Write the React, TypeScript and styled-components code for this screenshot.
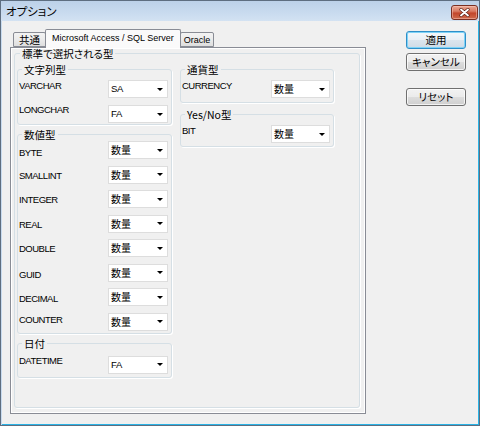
import React from "react";
import styled, { createGlobalStyle } from "styled-components";

const JP = `"Noto Sans CJK JP", "Noto Sans", sans-serif`;
const UI = `"Liberation Sans", Arial, "Noto Sans CJK JP", sans-serif`;

const GlobalStyle = createGlobalStyle`
  html, body { margin: 0; padding: 0; background: #ffffff; }
  body { font-family: ${UI}; font-feature-settings: "palt"; color: #000; }
  #root { width: 480px; height: 426px; }
`;

const Window = styled.div`
  width: 480px;
  height: 426px;
  box-sizing: border-box;
  border: 1px solid #5e6e80;
  background: #c8dbef;
  display: flex;
  flex-direction: column;
`;

const TitleBar = styled.div`
  height: 20px;
  flex: none;
  display: flex;
  justify-content: space-between;
  align-items: flex-start;
  padding: 0 1px 0 5px;
  background: linear-gradient(to bottom, #bcd1e9 0%, #c9dbef 60%, #d3e2f2 100%);
`;

const Title = styled.span`
  font-family: ${JP};
  font-size: 11.5px;
  line-height: 21px;
  color: #000;
`;

const CloseButton = styled.div`
  margin-top: 4px;
  width: 27px;
  height: 15px;
  box-sizing: border-box;
  border: 1px solid #7a2f22;
  border-radius: 3px;
  background: linear-gradient(to bottom, #eaa996 0%, #d87a62 40%, #c2462b 55%, #cf6a4c 100%);
  box-shadow: inset 0 0 0 1px rgba(255, 210, 200, 0.45);
  display: flex;
  align-items: center;
  justify-content: center;
`;

const Client = styled.div`
  flex: 1;
  min-height: 0;
  margin-left: 1px;
  background: #f0f0f0;
  border-right: 1px solid #2ab3e6;
  border-bottom: 1px solid #2ab3e6;
  display: flex;
  align-items: flex-start;
  padding: 8px 0 0 8px;
`;

const TabArea = styled.div`
  width: 356px;
  display: flex;
  flex-direction: column;
`;

const TabStrip = styled.div`
  height: 18px;
  display: flex;
  align-items: flex-end;
  padding-left: 3px;
`;

const Tab = styled.div<{ $selected?: boolean; $pad: number; $jp?: boolean }>`
  position: relative;
  z-index: ${(p) => (p.$selected ? 2 : 1)};
  box-sizing: border-box;
  height: ${(p) => (p.$selected ? 19 : 15)}px;
  margin-bottom: ${(p) => (p.$selected ? -1 : 0)}px;
  margin-left: ${(p) => (p.$selected ? -1 : 0)}px;
  margin-right: ${(p) => (p.$selected ? -1 : 0)}px;
  padding: 0 ${(p) => p.$pad}px ${(p) => (p.$selected ? 2 : 0)}px;
  border: 1px solid #898c95;
  border-bottom: ${(p) => (p.$selected ? "none" : "1px solid #898c95")};
  border-radius: 2px 2px 0 0;
  background: ${(p) =>
    p.$selected ? "#fafafa" : "linear-gradient(to bottom, #f3f3f3 0%, #ebebeb 50%, #dedede 100%)"};
  display: flex;
  align-items: center;
  font-family: ${(p) => (p.$jp ? JP : UI)};
  font-size: ${(p) => (p.$jp ? 10.5 : 9)}px;
  white-space: nowrap;
  color: #000;
`;

const Panel = styled.div`
  height: 367px;
  box-sizing: border-box;
  border: 1px solid #898c95;
  background: #f0f0f0;
  box-shadow: inset 1px 1px 0 #ffffff, inset -1px -1px 0 #ffffff;
  padding: 0 5px 5px 3px;
  display: flex;
  flex-direction: column;
`;

const Group = styled.fieldset<{ $pt: number; $pb: number; $grow?: boolean }>`
  margin: 0;
  min-width: 0;
  flex: ${(p) => (p.$grow ? 1 : "none")};
  border: 1px solid #d5dfe5;
  border-radius: 3px;
  box-shadow: 1px 1px 0 #ffffff;
  padding: ${(p) => p.$pt}px 3px ${(p) => p.$pb}px 1px;
`;

const Legend = styled.legend<{ $indent: number }>`
  font-family: ${JP};
  font-size: 10.5px;
  line-height: 11px;
  padding: 0 2px;
  margin-left: ${(p) => p.$indent}px;
  color: #000;
`;

const Columns = styled.div`
  display: grid;
  grid-template-columns: 155px 154px;
  column-gap: 8px;
  align-items: start;
  padding-left: 1px;
`;

const Stack = styled.div<{ $gap: number }>`
  display: flex;
  flex-direction: column;
  gap: ${(p) => p.$gap}px;
`;

const Rows = styled.div<{ $gap: number }>`
  display: flex;
  flex-direction: column;
  gap: ${(p) => p.$gap}px;
`;

const Row = styled.div`
  display: flex;
  justify-content: space-between;
  align-items: flex-start;
  height: 18px;
`;

const FieldLabel = styled.span<{ $shift: number }>`
  margin-top: ${(p) => p.$shift}px;
  font-size: 9.5px;
  line-height: 12px;
  letter-spacing: -0.5px;
  color: #000;
  white-space: nowrap;
`;

const Combo = styled.div<{ $width: number }>`
  width: ${(p) => p.$width}px;
  height: 18px;
  box-sizing: border-box;
  border: 1px solid #dddddd;
  background: #ffffff;
  display: flex;
  align-items: center;
  justify-content: space-between;
  padding: 0 3px 0 2px;
`;

const ComboText = styled.span<{ $jp?: boolean }>`
  font-family: ${(p) => (p.$jp ? JP : UI)};
  font-size: ${(p) => (p.$jp ? 10 : 9.5)}px;
  letter-spacing: ${(p) => (p.$jp ? 0 : -0.4)}px;
  line-height: 12px;
  color: #000;
`;

const Arrow = styled.span`
  width: 0;
  height: 0;
  border-left: 3px solid transparent;
  border-right: 3px solid transparent;
  border-top: 3px solid #000;
  margin-right: 1px;
`;

const ButtonColumn = styled.div`
  margin-left: 40px;
  padding-top: 2px;
  display: flex;
  flex-direction: column;
  gap: 4px;
`;

const Button = styled.div<{ $default?: boolean; $spaced?: boolean }>`
  width: 60px;
  height: 18px;
  box-sizing: border-box;
  margin-top: ${(p) => (p.$spaced ? 13 : 0)}px;
  border: 1px solid ${(p) => (p.$default ? "#2f8fc8" : "#707070")};
  border-radius: 3px;
  background: ${(p) =>
    p.$default
      ? "linear-gradient(to bottom, #f4f8fb 0%, #e9eff5 50%, #dbe5ee 51%, #cfdbe6 100%)"
      : "linear-gradient(to bottom, #f2f2f2 0%, #ebebeb 50%, #dddddd 51%, #cfcfcf 100%)"};
  box-shadow: ${(p) =>
    p.$default ? "inset 0 0 0 1px #7fd3f7" : "inset 0 0 0 1px rgba(255,255,255,0.75)"};
  display: flex;
  align-items: center;
  justify-content: center;
  font-family: ${JP};
  font-size: 10.5px;
  line-height: 12px;
  color: #000;
`;

type Field = { name: string; value: string; shift: number };

const stringFields: Field[] = [
  { name: "VARCHAR", value: "SA", shift: 0 },
  { name: "LONGCHAR", value: "FA", shift: -1 },
];

const numberFields: Field[] = [
  { name: "BYTE", value: "数量", shift: 6 },
  { name: "SMALLINT", value: "数量", shift: 4 },
  { name: "INTEGER", value: "数量", shift: 4 },
  { name: "REAL", value: "数量", shift: 4 },
  { name: "DOUBLE", value: "数量", shift: 3.5 },
  { name: "GUID", value: "数量", shift: 5 },
  { name: "DECIMAL", value: "数量", shift: 5 },
  { name: "COUNTER", value: "数量", shift: 1 },
];

const dateFields: Field[] = [{ name: "DATETIME", value: "FA", shift: -1 }];
const currencyFields: Field[] = [{ name: "CURRENCY", value: "数量", shift: 0 }];
const bitFields: Field[] = [{ name: "BIT", value: "数量", shift: 0 }];

const isJapanese = (s: string) => /[^\x00-\x7f]/.test(s);

function FieldRow({ field, width }: { field: Field; width: number }) {
  return (
    <Row>
      <FieldLabel $shift={field.shift}>{field.name}</FieldLabel>
      <Combo $width={width}>
        <ComboText $jp={isJapanese(field.value)}>{field.value}</ComboText>
        <Arrow />
      </Combo>
    </Row>
  );
}

function TypeGroup({
  title,
  fields,
  pt,
  pb,
  gap = 7,
  width = 60,
}: {
  title: string;
  fields: Field[];
  pt: number;
  pb: number;
  gap?: number;
  width?: number;
}) {
  return (
    <Group $pt={pt} $pb={pb}>
      <Legend $indent={3}>{title}</Legend>
      <Rows $gap={gap}>
        {fields.map((f) => (
          <FieldRow key={f.name} field={f} width={width} />
        ))}
      </Rows>
    </Group>
  );
}

function CloseIcon() {
  return (
    <svg width="11" height="9" viewBox="0 0 11 9">
      <path d="M2 1.5 L9 7.5 M9 1.5 L2 7.5" stroke="#5a1d12" strokeWidth="3.2" strokeLinecap="round" />
      <path d="M2 1.5 L9 7.5 M9 1.5 L2 7.5" stroke="#ffffff" strokeWidth="1.9" strokeLinecap="round" />
    </svg>
  );
}

export default function App() {
  return (
    <>
      <GlobalStyle />
      <Window>
        <TitleBar>
          <Title>オプション</Title>
          <CloseButton>
            <CloseIcon />
          </CloseButton>
        </TitleBar>
        <Client>
          <TabArea>
            <TabStrip>
              <Tab $pad={5} $jp>
                共通
              </Tab>
              <Tab $pad={6} $selected>
                Microsoft Access / SQL Server
              </Tab>
              <Tab $pad={3}>Oracle</Tab>
            </TabStrip>
            <Panel>
              <Group $pt={5} $pb={0} $grow>
                <Legend $indent={4}>標準で選択される型</Legend>
                <Columns>
                  <Stack $gap={4}>
                    <TypeGroup title="文字列型" fields={stringFields} pt={5} pb={1} />
                    <TypeGroup title="数値型" fields={numberFields} pt={1} pb={2} gap={6.5} />
                    <TypeGroup title="日付" fields={dateFields} pt={7} pb={3} />
                  </Stack>
                  <Stack $gap={6}>
                    <TypeGroup title="通貨型" fields={currencyFields} pt={5} pb={4} width={59} />
                    <TypeGroup title="Yes/No型" fields={bitFields} pt={5} pb={3} width={59} />
                  </Stack>
                </Columns>
              </Group>
            </Panel>
          </TabArea>
          <ButtonColumn>
            <Button $default>適用</Button>
            <Button>キャンセル</Button>
            <Button $spaced>リセット</Button>
          </ButtonColumn>
        </Client>
      </Window>
    </>
  );
}
